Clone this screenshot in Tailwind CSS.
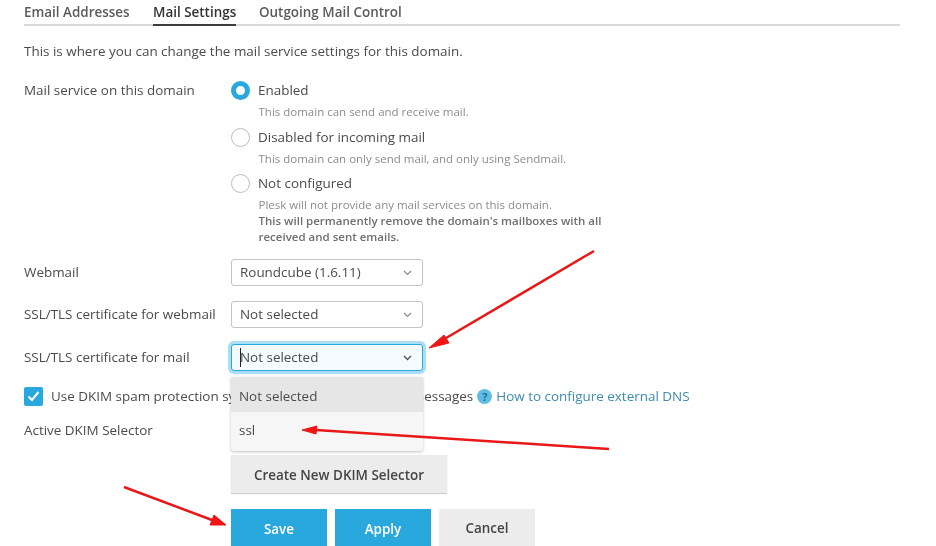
<!DOCTYPE html>
<html>
<head>
<meta charset="utf-8">
<script src="https://cdn.jsdelivr.net/npm/@tailwindcss/browser@4"></script>
</head>
<body class="bg-white">
<div class="relative w-[936px] h-[546px] overflow-hidden bg-white font-['Open_Sans',sans-serif] text-[13.44px] text-[#4b4b4b] [filter:blur(0.4px)]">
  <div class="pl-6 w-[900px]">
    <div class="flex gap-[23px] h-[26px] border-b-2 border-[#d9d9d9] pt-[3px] leading-[18px] text-[#5b5b5b] font-semibold whitespace-nowrap">
      <span class="w-[106px]">Email Addresses</span>
      <span class="w-[83px] h-[23px] border-b-2 border-[#3c3c3c] text-[#333]">Mail Settings</span>
      <span>Outgoing Mail Control</span>
    </div>
    <p class="mt-[15px] h-[20px] leading-[20px]">This is where you can change the mail service settings for this domain.</p>
    <div class="flex mt-[19px]">
      <div class="w-[207px] leading-[20px]">Mail service on this domain</div>
      <div class="flex flex-col">
        <div class="flex items-center gap-[9px] h-[20px]">
          <span class="w-[19px] h-[19px] rounded-full border-[5px] border-[#28a8dc] bg-white"></span>
          <span class="-ml-[1px]">Enabled</span>
        </div>
        <p class="mt-[4px] h-[16px] pl-[27.500px] text-[11.5px] leading-[16px] text-[#8c8c8c]">This domain can send and receive mail.</p>
        <div class="flex items-center gap-[9px] h-[20px] mt-[7px]">
          <span class="w-[19px] h-[19px] rounded-full border border-[#bdbdbd] bg-white"></span>
          <span class="-ml-[1px]">Disabled for incoming mail</span>
        </div>
        <p class="mt-[4px] h-[16px] pl-[27.500px] text-[11.5px] leading-[16px] text-[#8c8c8c]">This domain can only send mail, and only using Sendmail.</p>
        <div class="flex items-center gap-[9px] h-[20px] mt-[6px]">
          <span class="w-[19px] h-[19px] rounded-full border border-[#bdbdbd] bg-white"></span>
          <span class="-ml-[1px]">Not configured</span>
        </div>
        <div class="mt-[4px] pl-[27.500px] text-[11.5px] leading-[16px] text-[#8c8c8c] w-[400px]">
          <p>Plesk will not provide any mail services on this domain.</p>
          <p class="font-semibold text-[#6f6f6f]">This will permanently remove the domain's mailboxes with all received and sent emails.</p>
        </div>
      </div>
    </div>
    <div class="flex items-center mt-[14px] h-[27px]">
      <div class="w-[207px] -mt-[1px]">Webmail</div>
      <div class="w-[192px] h-[27px] pl-[8px] pr-[10px] flex items-center justify-between rounded-[3px] border border-[#c4c4c4] bg-white">
        <span>Roundcube (1.6.11)</span>
        <svg width="9" height="6" viewBox="0 0 9 6" fill="none" stroke="#8a8a8a" stroke-width="1.2"><path d="M1 1l3.500 3.500 3.500-3.500"/></svg>
      </div>
    </div>
    <div class="flex items-center mt-[15px] h-[27px]">
      <div class="w-[207px] -mt-[1px]">SSL/TLS certificate for webmail</div>
      <div class="w-[192px] h-[27px] pl-[8px] pr-[10px] flex items-center justify-between rounded-[3px] border border-[#c4c4c4] bg-white">
        <span>Not selected</span>
        <svg width="9" height="6" viewBox="0 0 9 6" fill="none" stroke="#8a8a8a" stroke-width="1.2"><path d="M1 1l3.500 3.500 3.500-3.500"/></svg>
      </div>
    </div>
    <div class="flex items-center mt-[16px] h-[27px]">
      <div class="w-[207px] -mt-[1px]">SSL/TLS certificate for mail</div>
      <div class="w-[192px] h-[27px] pl-[8px] pr-[10px] flex items-center justify-between rounded-[3px] border border-[#28a8dc] bg-[#f4fbff] shadow-[0_0_0_3px_#a9def5]">
        <span class="relative">Not selected<span class="absolute left-0 top-[1px] bottom-[1px] w-px bg-[#222]"></span></span>
        <svg width="9" height="6" viewBox="0 0 9 6" fill="none" stroke="#555" stroke-width="1.4"><path d="M1 1l3.500 3.500 3.500-3.500"/></svg>
      </div>
    </div>
    <div class="flex items-center mt-[15px] h-[20px]">
      <span class="w-[19px] h-[19px] rounded-[2px] bg-[#28a8dc] flex items-center justify-center">
        <svg width="13" height="11" viewBox="0 0 13 11" fill="none" stroke="#fff" stroke-width="2"><path d="M1.500 5.500l3.500 3.500 6.500-8"/></svg>
      </span>
      <span class="ml-[8px]">Use DKIM spam protection system to sign outgoing email messages</span>
      <span class="ml-[4px] w-[15px] h-[15px] rounded-full bg-[#5fbde4] text-[#1f6d92] text-[11px] font-bold leading-[15px] text-center">?</span>
      <span class="ml-[4px] text-[#3d8bb0]">How to configure external DNS</span>
    </div>
    <div class="h-[20px] mt-[14px] leading-[20px]">Active DKIM Selector</div>
    <div class="ml-[207px] mt-[15px] w-[216px] h-[38px] pt-[2px] bg-[#ececec] shadow-[0_1px_1px_#d0d0d0] text-[#444] font-semibold flex items-center justify-center">Create New DKIM Selector</div>
    <div class="ml-[207px] mt-[16px] flex gap-2 font-semibold">
      <div class="w-[96px] h-[38px] pt-[2px] bg-[#28a8dc] text-white flex items-center justify-center">Save</div>
      <div class="w-[96px] h-[38px] pt-[2px] bg-[#28a8dc] text-white flex items-center justify-center">Apply</div>
      <div class="w-[96px] h-[38px] bg-[#ececec] text-[#444] flex items-center justify-center">Cancel</div>
    </div>
  </div>

  <div class="absolute left-[231px] top-[377px] w-[192px] h-[74px] rounded-b-[3px] bg-[#f6f6f6] shadow-[0_1px_3px_rgba(0,0,0,0.25)]">
    <div class="h-[35px] pl-[8px] leading-[38px] bg-[#e6e6e6]">Not selected</div>
    <div class="h-[39px] pl-[8px] leading-[36px]">ssl</div>
  </div>

  <svg class="absolute left-0 top-0 pointer-events-none" width="936" height="546" viewBox="0 0 936 546" fill="#f01414" stroke="#e81818">
    <path d="M594 251L441 341" stroke-width="2.500" fill="none"/>
    <path d="M429 348L444 335L449 343Z" stroke-width="1"/>
    <path d="M609 449L316 430" stroke-width="2.500" fill="none"/>
    <path d="M302 430L317 426L316 434Z" stroke-width="1"/>
    <path d="M124 487L212 520" stroke-width="2.500" fill="none"/>
    <path d="M226 525L210 525L214 515Z" stroke-width="1"/>
  </svg>
</div>
</body>
</html>
